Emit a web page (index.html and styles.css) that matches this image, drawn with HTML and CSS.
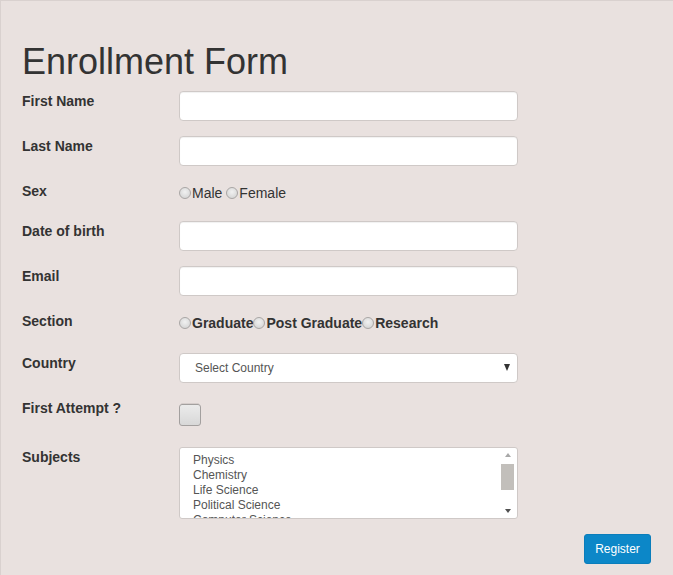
FILE: index.html
```html
<!DOCTYPE html>
<html>
<head>
<meta charset="utf-8">
<title>Enrollment Form</title>
<link rel="stylesheet" href="styles.css">
</head>
<body>
<div class="panel">
  <h1 class="title">Enrollment Form</h1>
  <form class="form">
    <div class="row row-input">
      <label class="lbl">First Name</label>
      <input class="field" type="text">
    </div>
    <div class="row row-input">
      <label class="lbl">Last Name</label>
      <input class="field" type="text">
    </div>
    <div class="row row-sex">
      <label class="lbl">Sex</label>
      <div class="radios">
        <label class="opt"><input type="radio" name="sex" class="rad">Male</label>
        <label class="opt"><input type="radio" name="sex" class="rad">Female</label>
      </div>
    </div>
    <div class="row row-input">
      <label class="lbl">Date of birth</label>
      <input class="field" type="text">
    </div>
    <div class="row row-input">
      <label class="lbl">Email</label>
      <input class="field" type="text">
    </div>
    <div class="row row-section">
      <label class="lbl">Section</label>
      <div class="radios bold">
        <label class="opt tight"><input type="radio" name="sec" class="rad">Graduate</label><label class="opt tight"><input type="radio" name="sec" class="rad">Post Graduate</label><label class="opt tight"><input type="radio" name="sec" class="rad">Research</label>
      </div>
    </div>
    <div class="row row-input">
      <label class="lbl">Country</label>
      <div class="select">
        <span class="select-text">Select Country</span>
        <span class="select-arrow"></span>
      </div>
    </div>
    <div class="row row-check">
      <label class="lbl">First Attempt ?</label>
      <input type="checkbox" class="chk">
    </div>
    <div class="row row-list">
      <label class="lbl">Subjects</label>
      <div class="listbox">
        <div class="options">
          <div class="option">Physics</div>
          <div class="option">Chemistry</div>
          <div class="option">Life Science</div>
          <div class="option">Political Science</div>
          <div class="option">Computer Science</div>
        </div>
        <div class="scrollbar">
          <div class="sb-btn"><span class="tri-up"></span></div>
          <div class="sb-track"><div class="sb-thumb"></div></div>
          <div class="sb-btn"><span class="tri-down"></span></div>
        </div>
      </div>
    </div>
    <div class="actions">
      <button type="button" class="btn">Register</button>
    </div>
  </form>
</div>
</body>
</html>
```

FILE: styles.css
```css
html, body {
  margin: 0;
  padding: 0;
  background: #e9e1df;
}
body {
  font-family: "Liberation Sans", Arial, Helvetica, sans-serif;
  color: #333;
  font-size: 14px;
  line-height: 20px;
}
.panel {
  box-sizing: border-box;
  width: 673px;
  height: 575px;
  overflow: hidden;
  border-top: 1px solid #d9d1cf;
  border-left: 1px solid #d9d1cf;
  background: #e9e1df;
  padding: 21px 22px 0 20px;
}
.title {
  margin: 20px 0 9px 1px;
  font-size: 36px;
  line-height: 39.6px;
  font-weight: normal;
  color: #333;
}
.form {
  margin: 0;
}
.row {
  display: flex;
  align-items: flex-start;
  margin-bottom: 15px;
}
.lbl {
  flex: 0 0 158px;
  font-weight: bold;
  line-height: 20px;
  padding-left: 1px;
  box-sizing: border-box;
}
.row-input { height: 30px; }
.row-sex { height: 25px; }
.row-section { height: 27px; }
.row-check { height: 34px; }
.field {
  box-sizing: border-box;
  width: 339px;
  height: 30px;
  margin: 0;
  border: 1px solid #cfc9c7;
  border-radius: 4px;
  background: #fff;
  box-shadow: inset 0 1px 1px rgba(0,0,0,0.06);
  font: 12px "Liberation Sans", Arial, sans-serif;
  padding: 5px 10px;
}
.radios {
  display: flex;
  align-items: center;
  height: 20px;
  margin-top: 2px;
  font-size: 14px;
  color: #333;
}
.radios.bold { font-weight: bold; }
.opt {
  display: inline-flex;
  align-items: center;
  margin-right: 4px;
}
.opt.tight { margin-right: 0; }
.rad {
  -webkit-appearance: none;
  appearance: none;
  box-sizing: border-box;
  width: 12px;
  height: 12px;
  margin: 0 1px 0 0;
  border: 1px solid #a9a6a5;
  border-radius: 50%;
  background: radial-gradient(circle at 50% 40%, #f1f1f1 0%, #d9d9d9 70%, #c9c9c9 100%);
}
.select {
  box-sizing: border-box;
  width: 339px;
  height: 30px;
  border: 1px solid #cfc9c7;
  border-radius: 4px;
  background: #fff;
  display: flex;
  align-items: center;
  justify-content: space-between;
  padding: 0 7px 0 15px;
  font-size: 12px;
  color: #555;
}
.select-text { line-height: 14px; }
.select-arrow {
  width: 0;
  height: 0;
  border-left: 3.5px solid transparent;
  border-right: 3.5px solid transparent;
  border-top: 7px solid #333;
}
.chk {
  -webkit-appearance: none;
  appearance: none;
  box-sizing: border-box;
  width: 22px;
  height: 22px;
  margin: 6px 0 0 0;
  border: 1px solid #a3a09f;
  border-radius: 3px;
  background: linear-gradient(#ebebeb, #d8d8d8);
  box-shadow: 0 -3px 0 -2px #d5cdcb;
}
.listbox {
  box-sizing: border-box;
  width: 339px;
  height: 72px;
  border: 1px solid #cfc9c7;
  border-radius: 3px;
  background: #fff;
  display: flex;
  overflow: hidden;
}
.options {
  flex: 1;
  padding: 5px 0 0 13px;
  overflow: hidden;
  font-size: 12px;
  line-height: 15px;
  color: #555;
}
.option { white-space: nowrap; }
.scrollbar {
  flex: 0 0 15px;
  margin-right: 2px;
  display: flex;
  flex-direction: column;
  background: #fff;
}
.sb-btn {
  height: 14px;
  display: flex;
  align-items: center;
  justify-content: center;
}
.sb-track {
  flex: 1;
  padding-top: 2px;
}
.sb-thumb {
  width: 13px;
  height: 26px;
  margin-left: 1px;
  background: #c2bfbb;
}
.tri-up {
  width: 0; height: 0;
  border-left: 3.5px solid transparent;
  border-right: 3.5px solid transparent;
  border-bottom: 4px solid #a8a8a8;
}
.tri-down {
  width: 0; height: 0;
  border-left: 3.5px solid transparent;
  border-right: 3.5px solid transparent;
  border-top: 4px solid #505050;
}
.actions {
  display: flex;
  justify-content: flex-end;
}
.btn {
  box-sizing: border-box;
  width: 67px;
  height: 30px;
  border: 1px solid #0a7dbb;
  border-radius: 3px;
  background: #0c87c8;
  color: #fff;
  font: 12px "Liberation Sans", Arial, sans-serif;
  padding: 0;
}
```
